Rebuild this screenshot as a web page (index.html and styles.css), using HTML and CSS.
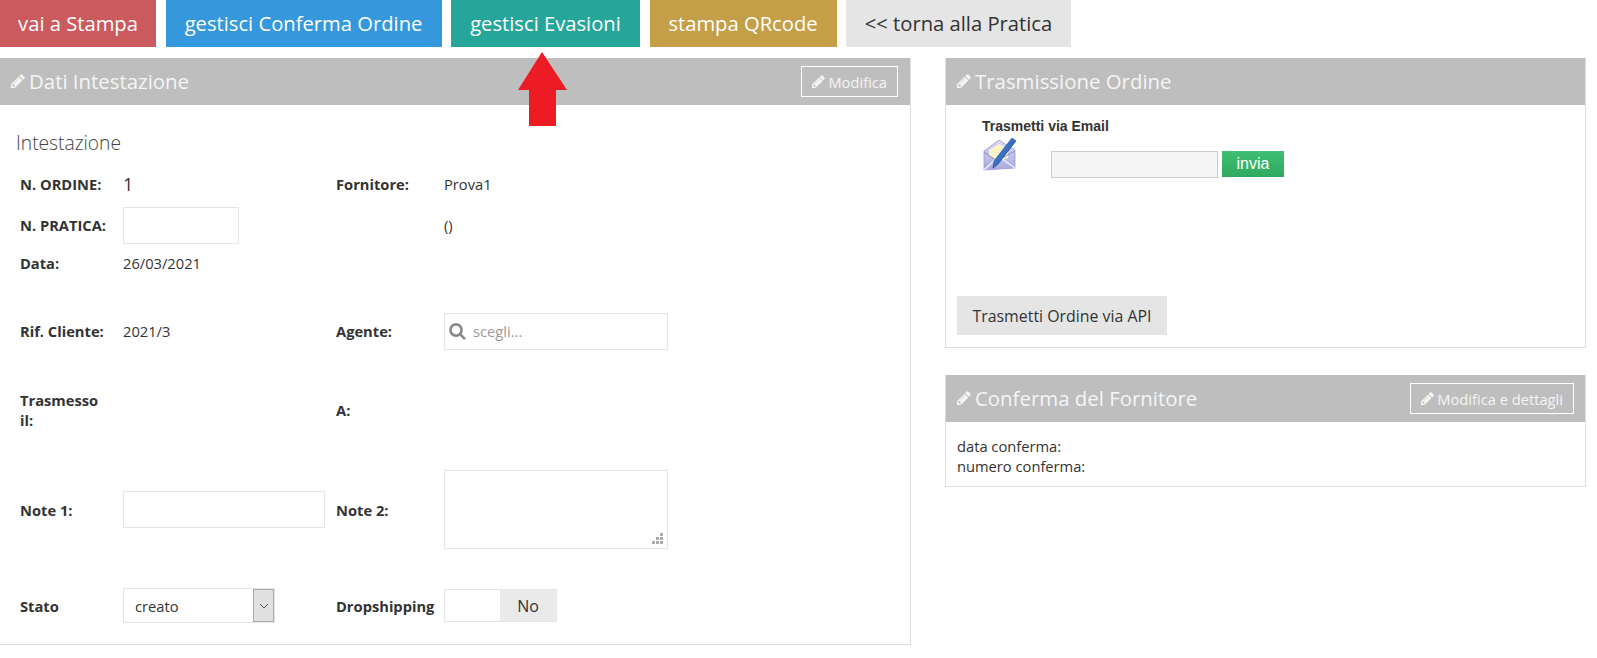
FILE: index.html
```html
<!DOCTYPE html>
<html lang="it">
<head>
<meta charset="utf-8">
<title>Ordine</title>
<link rel="stylesheet" href="styles.css">
</head>
<body>
<svg class="defs" width="0" height="0" aria-hidden="true">
  <symbol id="pencil" viewBox="0 0 1536 1536"><path d="M363 1408l91-91-235-235-91 91v107h128v128h107zm523-928q0-22-22-22-10 0-17 7L305 1007q-7 7-7 17 0 22 22 22 10 0 17-7l542-542q7-7 7-17zm-54-192l416 416-832 832H0v-416zm683 96q0 53-37 90l-166 166-416-416 166-165q36-38 90-38 53 0 91 38l235 234q37 39 37 91z"/></symbol>
</svg>
<nav class="actions">
  <a class="btn btn-red">vai a Stampa</a>
  <a class="btn btn-blue">gestisci Conferma Ordine</a>
  <a class="btn btn-teal">gestisci Evasioni</a>
  <a class="btn btn-gold">stampa QRcode</a>
  <a class="btn btn-grey">&lt;&lt; torna alla Pratica</a>
</nav>
<svg class="arrow" width="49" height="74" viewBox="0 0 49 74"><path d="M24 0 L49 38 L38 38 L38 74 L11 74 L11 38 L0 38 Z"/></svg>
<main class="columns">
  <section class="panel panel-main">
    <header class="panel-head">
      <h2 class="panel-title"><svg class="pencil"><use href="#pencil"/></svg>Dati Intestazione</h2>
      <a class="head-btn"><svg class="pencil pencil-sm"><use href="#pencil"/></svg>Modifica</a>
    </header>
    <div class="main-body">
      <h3 class="section-title">Intestazione</h3>
      <div class="form-grid">
        <div class="label raise">N. ORDINE:</div>
        <div class="value value-big raise">1</div>
        <div class="label raise">Fornitore:</div>
        <div class="value raise">Prova1</div>

        <div class="label raise">N. PRATICA:</div>
        <div class="value"><div class="field field-short"></div></div>
        <div></div>
        <div class="value raise">()</div>

        <div class="label">Data:</div>
        <div class="value">26/03/2021</div>
        <div></div>
        <div></div>

        <div class="label">Rif. Cliente:</div>
        <div class="value">2021/3</div>
        <div class="label">Agente:</div>
        <div class="value">
          <div class="field field-search">
            <svg class="search" width="19" height="19" viewBox="0 0 19 19"><circle cx="8" cy="8" r="5.6"/><path d="M12 12.2l5 5"/></svg>
            <span class="placeholder">scegli...</span>
          </div>
        </div>

        <div class="label label-narrow">Trasmesso il:</div>
        <div></div>
        <div class="label">A:</div>
        <div></div>

        <div class="label">Note 1:</div>
        <div class="value"><div class="field field-note"></div></div>
        <div class="label">Note 2:</div>
        <div class="value">
          <div class="field field-area">
            <svg class="grip" width="12" height="12" viewBox="0 0 12 12"><path d="M8 0h3v3H8zM4 4h3v3H4zM8 4h3v3H8zM0 8h3v3H0zM4 8h3v3H4zM8 8h3v3H8z"/></svg>
          </div>
        </div>

        <div class="label lower">Stato</div>
        <div class="value">
          <div class="select">
            <span class="select-text">creato</span>
            <span class="select-arrow"><svg width="10" height="6" viewBox="0 0 10 6"><path d="M1 1l4 4 4-4"/></svg></span>
          </div>
        </div>
        <div class="label lower">Dropshipping</div>
        <div class="value">
          <div class="toggle"><span class="toggle-on"></span><span class="toggle-off">No</span></div>
        </div>
      </div>
    </div>
  </section>

  <div class="side">
    <section class="panel">
      <header class="panel-head">
        <h2 class="panel-title"><svg class="pencil"><use href="#pencil"/></svg>Trasmissione Ordine</h2>
      </header>
      <div class="send-body">
        <div class="send-title">Trasmetti via Email</div>
        <div class="send-row">
          <svg class="mail" width="33" height="33" viewBox="0 0 33 33">
            <defs>
              <linearGradient id="env" x1="0" y1="0" x2="0" y2="1"><stop offset="0" stop-color="#dcdcf6"/><stop offset="1" stop-color="#a9a9de"/></linearGradient>
              <linearGradient id="pen" x1="0" y1="0" x2="1" y2="1"><stop offset="0" stop-color="#5fa0e8"/><stop offset="1" stop-color="#0d3f9e"/></linearGradient>
            </defs>
            <path d="M1 13 L16 2 L32 12 L32 30 L1 32 Z" fill="url(#env)" stroke="#9a9ad0" stroke-width=".8"/>
            <path d="M6 12 L16 6 L25 11 L25 20 L15 23 L6 17 Z" fill="#fdf3c8"/>
            <path d="M1 14 L14 23 L32 13" fill="none" stroke="#8f8fc8" stroke-width="1"/>
            <path d="M1 32 L13 21 M32 30 L19 21" stroke="#f1f1ff" stroke-width="1.4"/>
            <path d="M29 0 L33 3 L15 26 L10 30 L11 23 Z" fill="url(#pen)" stroke="#123b86" stroke-width=".6"/>
          </svg>
          <div class="mail-input"></div>
          <a class="send-btn">invia</a>
        </div>
        <a class="api-btn">Trasmetti Ordine via API</a>
      </div>
    </section>

    <section class="panel">
      <header class="panel-head">
        <h2 class="panel-title"><svg class="pencil"><use href="#pencil"/></svg>Conferma del Fornitore</h2>
        <a class="head-btn"><svg class="pencil pencil-sm"><use href="#pencil"/></svg>Modifica e dettagli</a>
      </header>
      <div class="confirm-body">
        <div>data conferma:</div>
        <div>numero conferma:</div>
      </div>
    </section>
  </div>
</main>
</body>
</html>
```

FILE: styles.css
```css
* { box-sizing: border-box; }
html, body { margin: 0; padding: 0; background: #fff; }
body {
  position: relative;
  font-family: "Open Sans", sans-serif;
  font-size: 14.7px;
  line-height: 20px;
  color: #333;
}
.defs { position: absolute; }

.actions { display: flex; height: 47px; margin-bottom: 11px; }
.btn {
  display: flex;
  align-items: center;
  justify-content: center;
  height: 47px;
  padding-bottom: 1px;
  font-size: 20.2px;
  color: #fff;
  margin-right: 9.5px;
}
.btn-red { width: 156px; background: #cb5a5e; }
.btn-blue { width: 276px; background: #3598dc; }
.btn-teal { width: 189px; background: #26a69a; }
.btn-gold { width: 187px; background: #c49f47; }
.btn-grey { width: 225px; background: #e5e5e5; color: #333; }

.arrow { position: absolute; left: 518px; top: 52px; z-index: 2; fill: #ed1c24; }

.columns { display: flex; align-items: flex-start; gap: 34px; }
.panel { border: 1px solid #ddd; border-top: 0; background: #fff; }
.panel-main { width: 911px; flex: none; border-left: 0; height: 587px; }
.panel-main .panel-head { padding-right: 12px; }
.side { width: 641px; flex: none; display: flex; flex-direction: column; gap: 27px; }

.panel-head {
  display: flex;
  align-items: center;
  justify-content: space-between;
  height: 47px;
  padding: 0 11px;
  background: #bebebe;
  color: #f5f5f5;
}
.panel-title {
  display: flex;
  align-items: center;
  margin: 0;
  padding-bottom: 1px;
  font-size: 20.4px;
  font-weight: 400;
  line-height: 28px;
}
.pencil { width: 14px; height: 14px; margin-right: 4px; fill: #f5f5f5; flex: none; }
.pencil-sm { width: 13px; height: 13px; margin-right: 3px; }
.head-btn {
  display: flex;
  align-items: center;
  height: 31px;
  padding: 0 10px;
  border: 1px solid #fff;
  color: #f5f5f5;
}

.main-body { padding: 28px 0 0 0; }
.section-title {
  margin: 0 0 12px 16px;
  font-size: 19.2px;
  font-weight: 300;
  line-height: 20px;
  color: #444;
}
.form-grid {
  display: grid;
  grid-template-columns: 103px 213px 108px 224px;
  grid-template-rows: 40px 41px 33px 104px 54px 145px 46px;
  align-items: center;
  padding-left: 20px;
}
.label { font-weight: 700; color: #333; }
.label-narrow { width: 90px; }
.value { color: #333; }
.value-big { font-size: 18px; }
.raise { margin-bottom: 2px; }
.lower { margin-top: 2px; }

.field { border: 1px solid #e5e5e5; background: #fff; }
.field-short { width: 116px; height: 37px; }
.field-note { width: 202px; height: 37px; }
.field-search { display: flex; align-items: center; width: 224px; height: 37px; padding-left: 3px; }
.field-area { position: relative; width: 224px; height: 79px; }
.search { fill: none; stroke: #888; stroke-width: 2.6; margin-right: 6px; }
.placeholder { color: #999; }
.grip { position: absolute; right: 3px; bottom: 3px; fill: #aaa; }

.select {
  display: flex;
  align-items: stretch;
  justify-content: space-between;
  width: 152px;
  height: 35px;
  margin-top: 1px;
  border: 1px solid #e5e5e5;
}
.select-text { padding-left: 11px; line-height: 34px; }
.select-arrow {
  display: flex;
  align-items: center;
  justify-content: center;
  width: 21px;
  border: 1px solid #a9a9a9;
  background: #e0e0e0;
}
.select-arrow svg { fill: none; stroke: #555; stroke-width: 1; }

.toggle { display: flex; width: 113px; height: 33px; margin-top: 1px; border: 1px solid #e5e5e5; }
.toggle-on { width: 55px; }
.toggle-off {
  flex: 1;
  display: flex;
  align-items: center;
  justify-content: center;
  background: #eaeaea;
  font-size: 16px;
}

.send-body { height: 242px; padding: 12px 0 0 11px; }
.send-title {
  margin-left: 25px;
  font-family: "Liberation Sans", sans-serif;
  font-size: 14px;
  font-weight: 700;
  line-height: 18px;
  color: #333;
}
.send-row { display: flex; align-items: flex-start; height: 161px; margin-left: 25px; }
.mail { margin: 3px 0 0 1px; flex: none; }
.mail-input {
  width: 167px;
  height: 27px;
  margin: 16px 4px 0 35px;
  border: 1px solid #ccc;
  background: #f5f5f5;
}
.send-btn {
  display: flex;
  align-items: center;
  justify-content: center;
  width: 62px;
  height: 26px;
  margin-top: 16px;
  background: linear-gradient(#3fbf74, #2fa95f);
  color: #fff;
  font-family: "Liberation Sans", sans-serif;
  font-size: 16px;
}
.api-btn {
  display: flex;
  align-items: center;
  justify-content: center;
  width: 210px;
  height: 39px;
  background: #e5e5e5;
  color: #333;
  font-size: 15.9px;
}
.confirm-body { height: 64px; padding: 14px 11px 0; }
```
